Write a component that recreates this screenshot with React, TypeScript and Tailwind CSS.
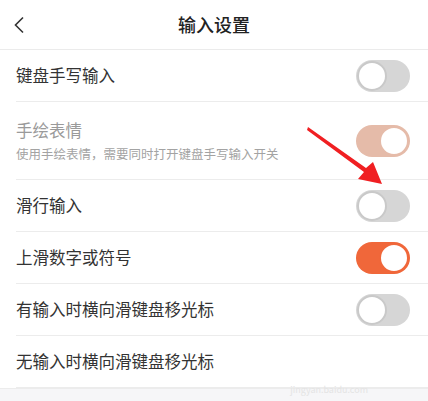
import React from "react";

function Toggle({ state }: { state: "off" | "on" | "disabled" }) {
  const track =
    state === "on" ? "bg-[#f0673a]" : state === "disabled" ? "bg-[#e5bba9]" : "bg-[#d6d6d6]";
  const knobBorder =
    state === "on" ? "border-[#f0673a]" : state === "disabled" ? "border-[#e5bba9]" : "border-[#c9c9c9]";
  const justify = state === "off" ? "justify-start" : "justify-end";
  return (
    <div className={`w-[54px] h-[32px] rounded-full ${track} flex items-center ${justify} p-[1px]`}>
      <div className={`w-[30px] h-[30px] rounded-full bg-white border-2 ${knobBorder}`} />
    </div>
  );
}

function Row({ title, toggle, last }: { title: string; toggle?: "off" | "on" | "disabled"; last?: boolean }) {
  return (
    <div className="pl-[16px]">
      <div className={`h-[52px] flex items-center justify-between pr-[18px] ${last ? "" : "border-b border-[#ececec]"}`}>
        <span className="text-[16.5px] text-[#333]">{title}</span>
        {toggle && <Toggle state={toggle} />}
      </div>
    </div>
  );
}

export default function App() {
  return (
    <div
      className="w-[428px] h-[401px] bg-white relative overflow-hidden flex flex-col"
      style={{ fontFamily: '"Noto Sans CJK SC", "Noto Sans", sans-serif' }}
    >
      <div className="h-[50px] border-b border-[#ebebeb] flex items-center justify-center relative shrink-0">
        <svg className="absolute left-[13px] top-[16px]" width="12" height="18" viewBox="0 0 12 18">
          <path d="M10 1.5 L2.5 9 L10 16.5" fill="none" stroke="#333" strokeWidth="1.6" />
        </svg>
        <span className="text-[18px] font-medium text-[#222]">输入设置</span>
      </div>
      <Row title="键盘手写输入" toggle="off" />
      <div className="pl-[16px]">
        <div className="h-[78px] flex items-center justify-between pr-[18px] border-b border-[#ececec]">
          <div className="flex flex-col">
            <span className="text-[16.5px] text-[#9a9a9a] leading-[24px]">手绘表情</span>
            <span className="text-[12.5px] text-[#a3a3a3] leading-[18px] mt-[3px]">使用手绘表情，需要同时打开键盘手写输入开关</span>
          </div>
          <Toggle state="disabled" />
        </div>
      </div>
      <Row title="滑行输入" toggle="off" />
      <Row title="上滑数字或符号" toggle="on" />
      <Row title="有输入时横向滑键盘移光标" toggle="off" />
      <Row title="无输入时横向滑键盘移光标" />
      <div className="flex-1 bg-[#f6f6f8] border-t border-[#ececec] relative">
        <span className="absolute right-[60px] -top-[6px] text-[9px] text-[#e4e4e4]">jingyan.baidu.com</span>
      </div>
      <svg className="absolute left-0 top-0 pointer-events-none" width="428" height="401" viewBox="0 0 428 401">
        <path d="M308 127 L366 168 L373 162 L382 184 L358 179 L364 172 L307 130 Z" fill="#f01f22" />
      </svg>
    </div>
  );
}
